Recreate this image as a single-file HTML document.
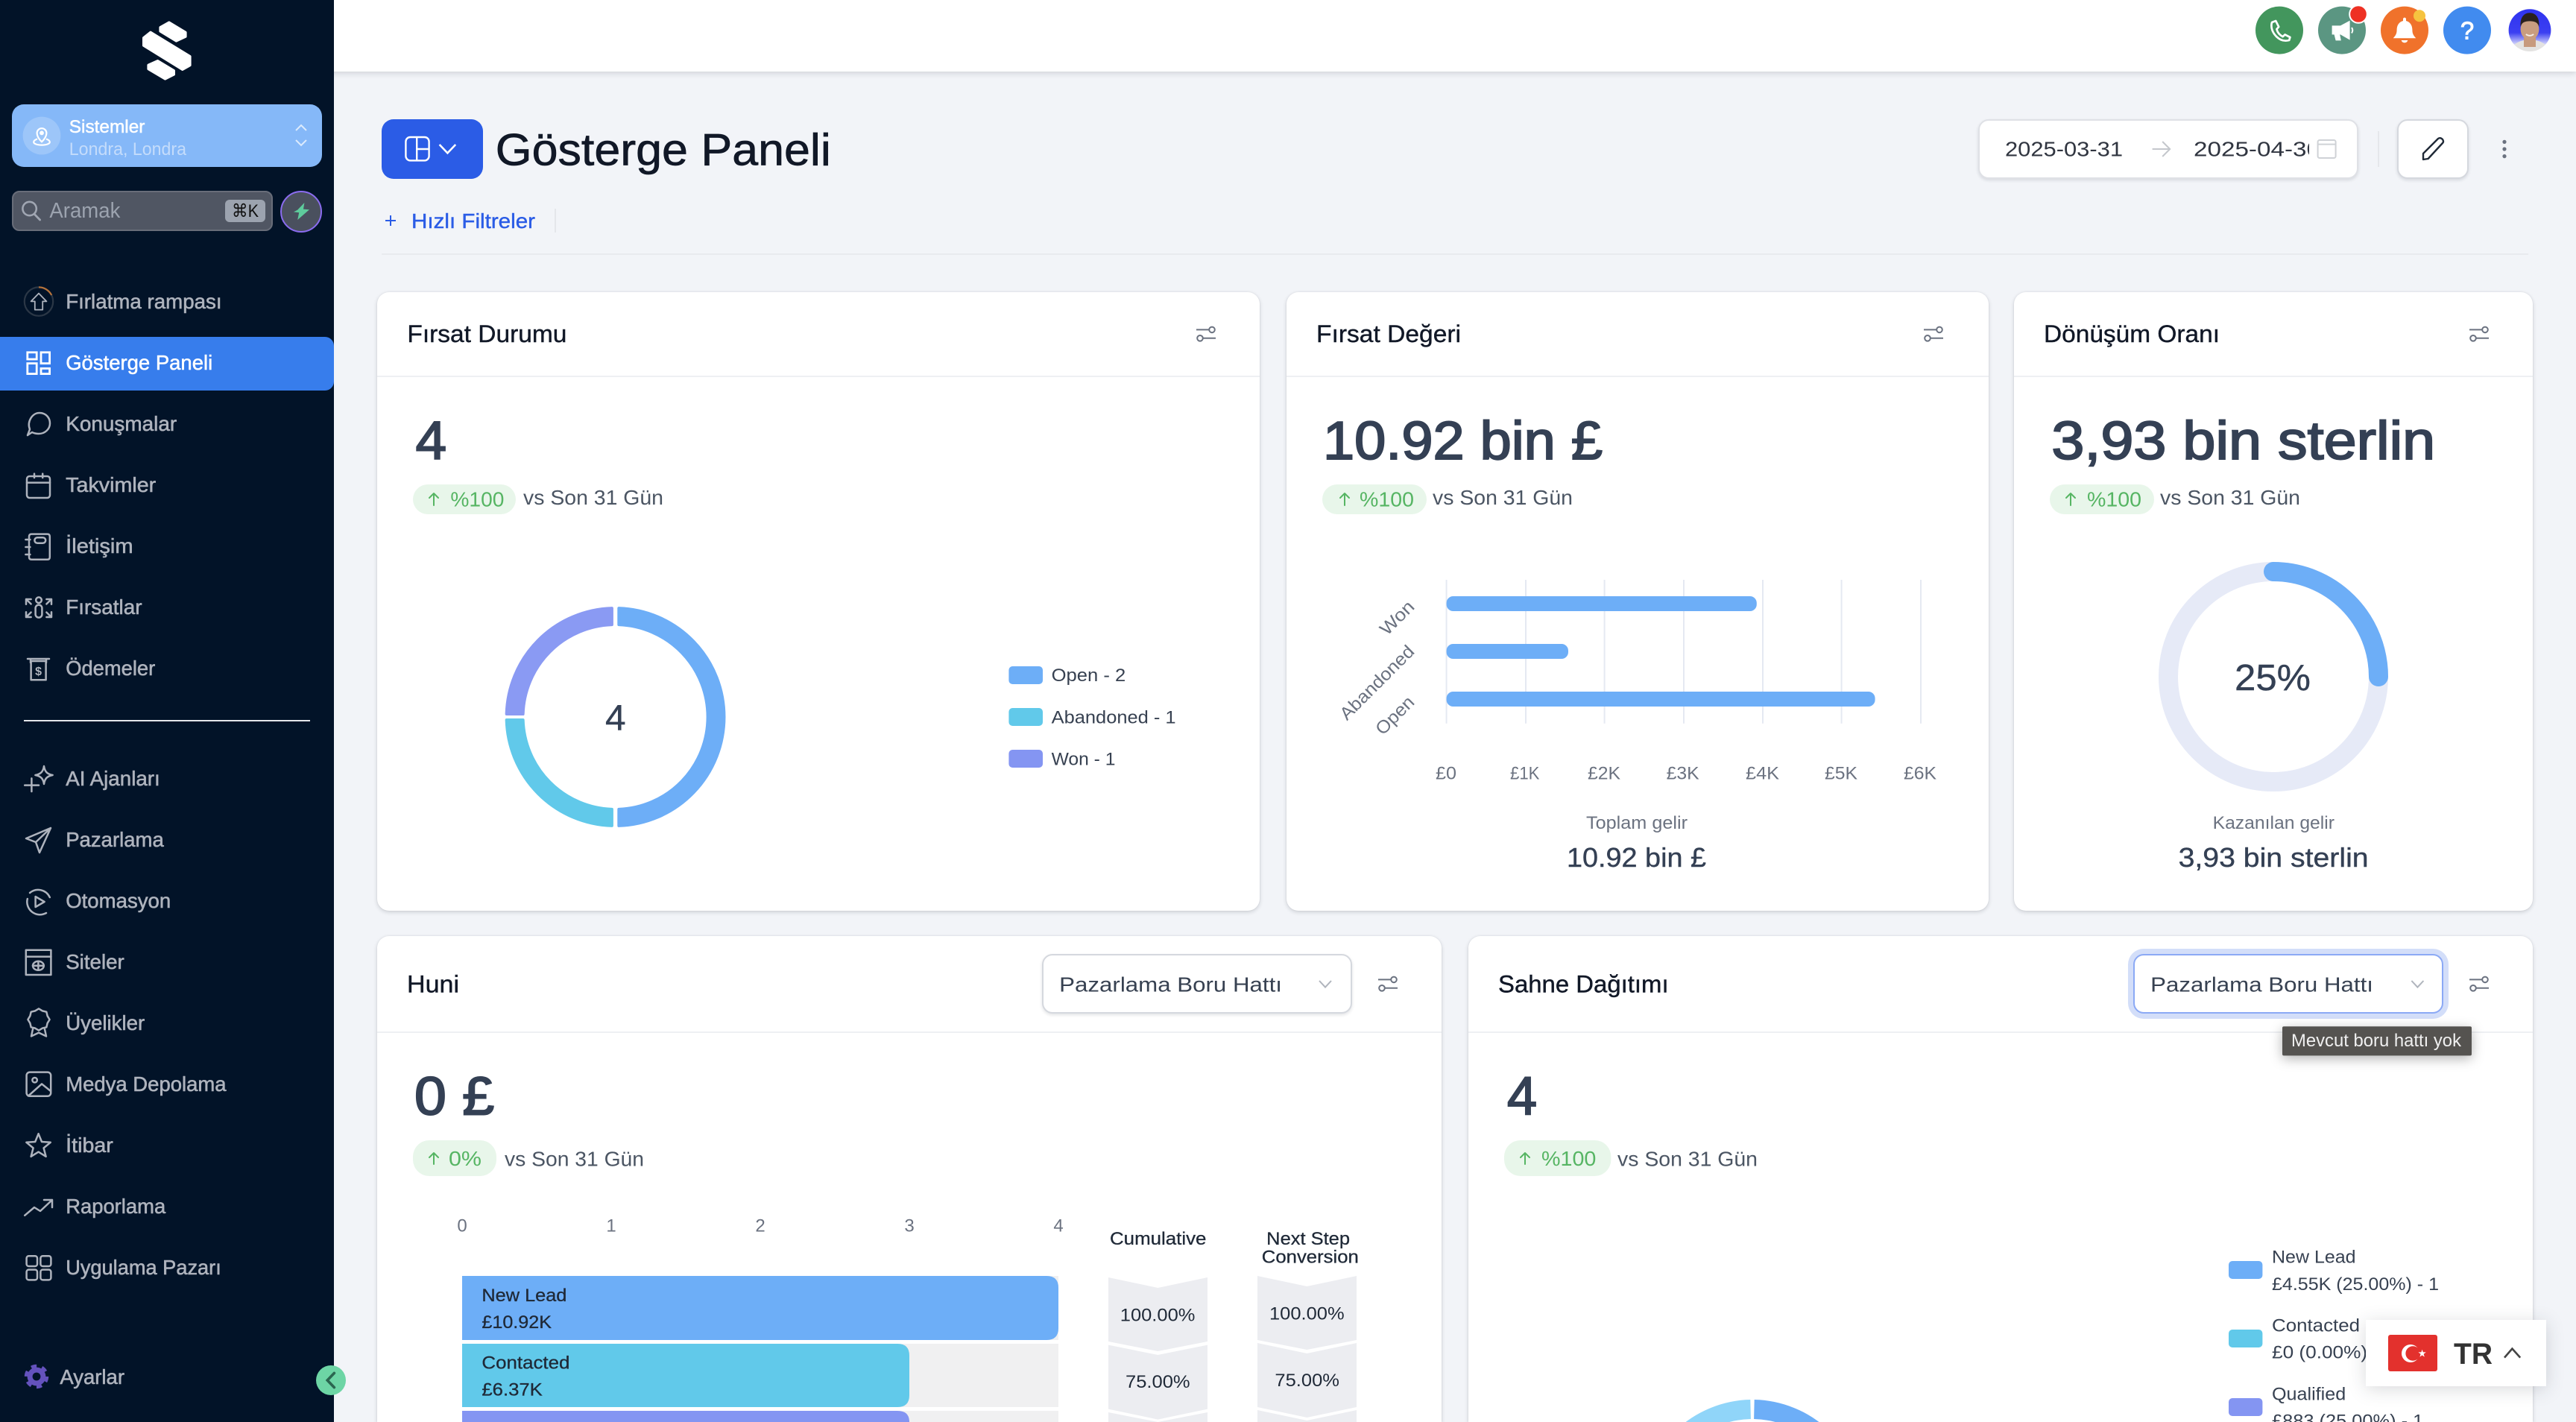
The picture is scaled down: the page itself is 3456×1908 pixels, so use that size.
<!DOCTYPE html>
<html lang="tr"><head><meta charset="utf-8"><title>Gösterge Paneli</title>
<style>
html,body{margin:0;padding:0;width:3456px;height:1908px;overflow:hidden;background:#f2f4f8}
#p{position:absolute;left:0;top:0;width:1728px;height:954px;transform:scale(2);transform-origin:0 0;overflow:hidden;background:#f2f4f8;font-family:"Liberation Sans","DejaVu Sans",sans-serif}
#p div{position:absolute;box-sizing:border-box}
.card{background:#fff;border-radius:8px;box-shadow:0 1px 3px rgba(16,24,40,.16),0 0 1px rgba(16,24,40,.08)}
.card.b{border-radius:8px 8px 0 0}
.ln{background:#eef0f3;height:1px}
.inp{background:#fff;border:1px solid #dfe1e6;border-radius:7px;box-shadow:0 1px 2px rgba(16,24,40,.12)}
svg{position:absolute;left:0;top:0;overflow:hidden}
text{font-family:"Liberation Sans","DejaVu Sans",sans-serif;font-size:14px;white-space:pre}
.n{font-size:14px;fill:#aeb3bd;stroke:#aeb3bd;stroke-width:.28}
.ic{fill:none;stroke:#aeb3bd;stroke-width:1.25;stroke-linecap:round;stroke-linejoin:round}
.t{font-size:16px;fill:#111827;stroke:#111827;stroke-width:.2}
.big{font-size:36px;fill:#344054;stroke:#344054;stroke-width:1}
.g{fill:#56b563}
.vs{fill:#4b5563}
.s{font-size:12px;fill:#6b7280}
.l{font-size:12px;fill:#374151}
.d{font-size:12px;fill:#1f2937;stroke:#1f2937;stroke-width:.15}
.med{font-size:18px;fill:#344054;stroke:#344054;stroke-width:.2}
.arw{fill:none;stroke:#56b563;stroke-width:1;stroke-linecap:round;stroke-linejoin:round}
.fl{fill:none;stroke:#6b7280;stroke-width:1}
.sel{fill:#374151}
.dt{fill:#303540}
</style></head><body>
<div id="p">
<!-- main cards -->
<div style="left:256px;top:170px;width:1440px;height:1px;background:#e8eaee"></div>
<div style="left:372px;top:140px;width:1px;height:16px;background:#e5e7eb"></div>
<div style="left:256px;top:80px;width:68px;height:40px;background:#2b5ce6;border-radius:8px"></div>
<div class="inp" style="left:1327.4px;top:80.2px;width:255px;height:39.4px"></div>
<div style="left:1595px;top:88px;width:1px;height:24px;background:#e5e7eb"></div>
<div class="inp" style="left:1608px;top:80.2px;width:48px;height:39.4px;border-color:#d5d8de"></div>

<div class="card" style="left:253px;top:196px;width:592px;height:414.5px"></div>
<div class="card" style="left:863px;top:196px;width:470.5px;height:414.5px"></div>
<div class="card" style="left:1350.5px;top:196px;width:348.5px;height:414.5px"></div>
<div class="card b" style="left:253px;top:628px;width:714px;height:326px"></div>
<div class="card b" style="left:985px;top:628px;width:714px;height:326px"></div>
<div class="ln" style="left:253px;top:252px;width:592px"></div>
<div class="ln" style="left:863px;top:252px;width:470.5px"></div>
<div class="ln" style="left:1350.5px;top:252px;width:348.5px"></div>
<div class="ln" style="left:253px;top:692px;width:714px"></div>
<div class="ln" style="left:985px;top:692px;width:714px"></div>
<div class="inp" style="left:699.2px;top:640px;width:207.8px;height:40px;border-color:#d5d8de"></div>
<div class="inp" style="left:1431.2px;top:640px;width:207.8px;height:40px;border-color:#8ba9f5;box-shadow:0 0 0 3.5px #d3def9"></div>

<!-- topbar and sidebar -->
<div style="left:0;top:0;width:1728px;height:48px;background:#fff;box-shadow:0 1px 4px rgba(16,24,40,.16)"></div>
<div style="left:0;top:0;width:224px;height:954px;background:#021328"></div>
<div style="left:8px;top:70px;width:208px;height:41.5px;background:#85b8f8;border-radius:8px"></div>
<div style="left:8px;top:127.7px;width:174.5px;height:27.6px;background:#505663;border:1px solid #686d79;border-radius:5px"></div>
<div style="left:151px;top:133.5px;width:26.5px;height:15.8px;background:#9ca3af;border-radius:3px"></div>
<div style="left:188px;top:127.5px;width:28px;height:28px;background:#4a505e;border:1px solid #8b6cf0;border-radius:50%"></div>
<div style="left:0;top:225.5px;width:224px;height:36px;background:#377dec;border-radius:0 6px 6px 0"></div>
<div style="left:16px;top:483px;width:192px;height:1px;background:#e5e7eb"></div>

<svg width="1728" height="954" viewBox="0 0 1728 954" xmlns="http://www.w3.org/2000/svg">
<defs>
<g id="f"><path d="M-6.5 -2.8H2M-1.8 2.9H6.5"/><circle cx="4" cy="-2.8" r="1.9"/><circle cx="-4" cy="2.9" r="1.9"/></g>
<linearGradient id="av" x1="0" y1="0" x2="0" y2="1"><stop offset="0" stop-color="#2f33ef"/><stop offset=".55" stop-color="#3b3ff2"/><stop offset=".8" stop-color="#c9cbfa"/><stop offset="1" stop-color="#fff"/></linearGradient>
<clipPath id="avc"><circle cx="1697" cy="20.3" r="14.2"/></clipPath>
<clipPath id="dc"><rect x="1471" y="85" width="78" height="30"/></clipPath>
</defs>

<!-- logo -->
<g fill="#fff" stroke="#fff" stroke-width="1.6" stroke-linejoin="round">
<polygon points="101,21.6 127.5,37.8 127.5,43.8 122.4,46.7 96.3,30.6 96.3,25.4"/>
<polygon points="113.4,15 124.5,21.7 124.5,24.6 118.2,27.5 107.5,21 107.5,18.3"/>
<polygon points="105.8,40.8 116.7,47.4 116.7,50 110.8,53 99.5,46.3 99.5,43.6"/>
</g>

<!-- location -->
<circle cx="28" cy="91" r="12.7" fill="#fff" fill-opacity=".2"/>
<g fill="none" stroke="#fff" stroke-width="1.1" stroke-linecap="round" stroke-linejoin="round">
<path d="M28 95.2C26 93.2 24.8 91.2 24.8 89.3A3.2 3.2 0 0 1 31.2 89.3C31.2 91.2 30 93.2 28 95.2Z"/>
<circle cx="28" cy="89.2" r=".9" fill="#fff"/>
<path d="M24.6 93.4C23.2 94 22.6 94.7 22.6 95.3C22.6 96.5 25 97.3 28 97.3C31 97.3 33.4 96.5 33.4 95.3C33.4 94.7 32.8 94 31.4 93.4"/>
</g>
<text x="46.4" y="89" style="font-size:12px" fill="#fff" stroke="#fff" stroke-width=".25" textLength="50.8" lengthAdjust="spacingAndGlyphs">Sistemler</text>
<text x="46.4" y="104" style="font-size:12px" fill="#c4dcfb" textLength="78.6" lengthAdjust="spacingAndGlyphs">Londra, Londra</text>
<path d="M198.5 87.5L202 84L205.5 87.5M198.5 94L202 97.5L205.5 94" fill="none" stroke="#dcebfd" stroke-width="1"/>

<!-- search -->
<circle cx="19.8" cy="140" r="4.6" fill="none" stroke="#a0a6b2" stroke-width="1.3"/><path d="M23 143.6L26.8 147.5" stroke="#a0a6b2" stroke-width="1.4" stroke-linecap="round"/>
<text x="33.2" y="146" style="font-size:14.5px" fill="#9ca3af" textLength="47.5" lengthAdjust="spacingAndGlyphs">Aramak</text>
<text x="155.5" y="145.5" style="font-size:12px" fill="#111" textLength="18" lengthAdjust="spacingAndGlyphs">⌘K</text>
<polygon points="204.2,136 199.6,140.8 197,142.2 200.6,142.6 199.6,147.5 207.5,140.6 203.5,140.3" fill="#5ecb9c"/>

<!-- nav -->
<circle cx="26" cy="202.3" r="9.6" fill="none" stroke="#2b3746" stroke-width="1.1"/>
<path d="M26 192.7A9.6 9.6 0 0 1 34.6 198" fill="none" stroke="#b5723a" stroke-width="1.1"/>
<path class="ic" d="M26 196.8L31.2 202.2H28.6V207.8H23.4V202.2H20.8Z" style="stroke-width:.9"/>
<text class="n" x="44.1" y="207" textLength="104.7" lengthAdjust="spacingAndGlyphs">Fırlatma rampası</text>

<g fill="none" stroke="#fff" stroke-width="1.4"><rect x="18.4" y="236.4" width="6.2" height="4.6"/><rect x="27.5" y="236.4" width="5.8" height="7.4"/><rect x="18.4" y="243.8" width="6.2" height="7"/><rect x="27.5" y="247.2" width="5.8" height="3.6"/></g>
<text x="44.1" y="248" fill="#fff" stroke="#fff" stroke-width=".25" textLength="98.5" lengthAdjust="spacingAndGlyphs">Gösterge Paneli</text>

<path class="ic" d="M18.5 292L20 288C18 283 21.5 277 26.5 277C31 277 33.5 280.5 33.5 284C33.5 288 30 291 26 291C24 291 22.5 290.5 21.5 290Z"/>
<text class="n" x="44.1" y="289" textLength="74.5" lengthAdjust="spacingAndGlyphs">Konuşmalar</text>

<g class="ic"><rect x="18" y="319.5" width="15.5" height="14.5" rx="1.8"/><path d="M18 323.8H33.5M23 317.8V320.5M28.6 317.8V320.5"/></g>
<text class="n" x="44.1" y="330" textLength="60.5" lengthAdjust="spacingAndGlyphs">Takvimler</text>

<g class="ic"><path d="M19.5 360Q19.5 358.3 21.2 358.3H31.8Q33.4 358.3 33.4 360V373.7Q33.4 375.4 31.8 375.4H21.2Q19.5 375.4 19.5 373.7Z"/><rect x="23.2" y="360.6" width="7.4" height="3.8" rx="1.9"/><path d="M17.2 362H20.2M17.2 367H20.2M17.2 372H20.2"/></g>
<text class="n" x="44.1" y="371" textLength="45.2" lengthAdjust="spacingAndGlyphs">İletişim</text>

<g class="ic"><circle cx="26" cy="402.6" r="1.9"/><rect x="23.8" y="405.8" width="4.4" height="8.5" rx="2.2"/><path d="M20.8 402H17.5V405.4M17.5 402L20.8 405.2M31.2 402H34.5V405.4M34.5 402L31.2 405.2M20.8 414H17.5V410.6M17.5 414L20.8 410.8M31.2 414H34.5V410.6M34.5 414L31.2 410.8"/></g>
<text class="n" x="44.1" y="412" textLength="51.2" lengthAdjust="spacingAndGlyphs">Fırsatlar</text>

<g class="ic"><path d="M18.5 442H33M20.5 442V444.5M31 442V444.5"/><rect x="20.8" y="443.5" width="10" height="12.6"/></g>
<text x="25.8" y="453" text-anchor="middle" style="font-size:8px;font-weight:bold" fill="#aeb3bd">$</text>
<text class="n" x="44.1" y="453" textLength="60" lengthAdjust="spacingAndGlyphs">Ödemeler</text>

<g class="ic"><path d="M29.5 514C30 517.5 31.5 519.3 35.3 520C31.5 520.7 30 522.5 29.5 526C29 522.5 27.5 520.7 23.7 520C27.5 519.3 29 517.5 29.5 514Z"/><path d="M16.6 526.8H26M21.2 522.2V531"/></g>
<text class="n" x="44.1" y="527" textLength="63.3" lengthAdjust="spacingAndGlyphs">AI Ajanları</text>

<path class="ic" d="M17.5 562.5L34 555.5L26.5 572L24 565ZM24 565L34 555.5"/>
<text class="n" x="44.1" y="568" textLength="65.8" lengthAdjust="spacingAndGlyphs">Pazarlama</text>

<g class="ic"><path d="M33.4 602A8.6 8.6 0 0 0 20 599M18.4 603A8.6 8.6 0 0 0 31 612.5"/><path d="M23.8 601.5L29.8 605L23.8 608.5Z"/></g>
<text class="n" x="44.1" y="609" textLength="70.5" lengthAdjust="spacingAndGlyphs">Otomasyon</text>

<g class="ic"><rect x="17.4" y="637.4" width="16.8" height="16.6"/><path d="M17.4 641.8H34.2"/><ellipse cx="25.7" cy="647.9" rx="3.7" ry="3"/><path d="M22 647.9H29.4M25.7 644.9V650.9"/></g>
<text class="n" x="44.1" y="650" textLength="39.3" lengthAdjust="spacingAndGlyphs">Siteler</text>

<g class="ic"><polygon points="26,676.7 28.41,678.18 31.16,678.84 31.82,681.59 33.3,684 31.82,686.41 31.16,689.16 28.41,689.82 26,691.3 23.59,689.82 20.84,689.16 20.18,686.41 18.7,684 20.18,681.59 20.84,678.84 23.59,678.18"/><path d="M22 690.5L21 695.2L26 692.8L31 695.2L30 690.5"/></g>
<text class="n" x="44.1" y="691" textLength="53" lengthAdjust="spacingAndGlyphs">Üyelikler</text>

<g class="ic"><rect x="17.8" y="719.3" width="16.3" height="16.1" rx="2.2"/><circle cx="23.3" cy="724.6" r="1.6"/><path d="M19 735.2L28 727.2L34 732"/></g>
<text class="n" x="44.1" y="732" textLength="107.7" lengthAdjust="spacingAndGlyphs">Medya Depolama</text>

<polygon class="ic" points="25.8,760.6 28,766 33.9,766.4 29.3,770.2 30.8,775.9 25.8,772.8 20.8,775.9 22.3,770.2 17.7,766.4 23.6,766"/>
<text class="n" x="44.1" y="773" textLength="31.8" lengthAdjust="spacingAndGlyphs">İtibar</text>

<path class="ic" d="M16.6 815.4L23 810L27 812.5L35 805M29.5 805H35V810"/>
<text class="n" x="44.1" y="814" textLength="67" lengthAdjust="spacingAndGlyphs">Raporlama</text>

<g class="ic"><rect x="17.8" y="842.6" width="7.2" height="6.9" rx="1.5"/><rect x="27.2" y="842.6" width="7" height="6.9" rx="1.5"/><rect x="17.8" y="851.8" width="7.2" height="6.9" rx="1.5"/><rect x="27.2" y="851.8" width="7" height="6.9" rx="1.5"/></g>
<text class="n" x="44.1" y="855" textLength="104.3" lengthAdjust="spacingAndGlyphs">Uygulama Pazarı</text>

<circle cx="24.5" cy="923.5" r="6.2" fill="#6452bd"/><circle cx="24.5" cy="923.5" r="6.9" fill="none" stroke="#6452bd" stroke-width="2.4" stroke-dasharray="3.6 3.63"/><circle cx="24.5" cy="923.5" r="2.7" fill="#021328"/>
<text class="n" x="40.2" y="928.5" textLength="43.3" lengthAdjust="spacingAndGlyphs">Ayarlar</text>

<circle cx="222" cy="926" r="10" fill="#6dd5a5"/><path d="M224.2 921.2L219.6 926L224.2 930.8" fill="none" stroke="#2b6650" stroke-width="1.8" stroke-linecap="round"/>

<!-- topbar icons -->
<circle cx="1529" cy="20.3" r="16" fill="#43965d"/>
<path d="M1524 15L1526.6 14L1528.6 18L1527.2 19.6C1527.8 22 1529.4 23.6 1531.3 24.6L1532.8 23.2L1536.2 25L1535.6 27C1532 28 1529 26.5 1527 24.5C1524.5 22 1523 18.4 1524 15Z" fill="none" stroke="#fff" stroke-width="1.35" stroke-linejoin="round"/>
<circle cx="1571" cy="20.3" r="16" fill="#5b9682"/>
<path d="M1564.3 17.2H1570L1576.3 13.8V26.8L1570 23.2H1569.6L1570.4 27.2H1566.8L1565.8 23.2H1564.3Z" fill="#fff"/><path d="M1577.5 18.5Q1578.8 20.3 1577.5 22.2" fill="none" stroke="#fff" stroke-width="1"/>
<circle cx="1582" cy="9.5" r="5.9" fill="#ee3124" stroke="#fff" stroke-width="1"/>
<circle cx="1613" cy="20.3" r="16" fill="#f0722b"/>
<path d="M1613 11.8C1613.7 11.8 1614 12.3 1614 13V14C1617 14.8 1618.2 17.3 1618.2 20C1618.2 23 1619.3 24 1620.6 25.6H1605.4C1606.7 24 1607.8 23 1607.8 20C1607.8 17.3 1609 14.8 1612 14V13C1612 12.3 1612.3 11.8 1613 11.8Z" fill="#fff"/><path d="M1610.8 27H1615.2Q1614.6 28.7 1613 28.7Q1611.4 28.7 1610.8 27Z" fill="#fff"/>
<circle cx="1623" cy="10.6" r="4" fill="#f6c33f"/>
<circle cx="1655" cy="20.3" r="16" fill="#418bef"/>
<text x="1655" y="26.2" text-anchor="middle" style="font-size:16.5px" fill="#fff" stroke="#fff" stroke-width=".45">?</text>
<g clip-path="url(#avc)"><rect x="1682" y="6" width="30" height="29" fill="url(#av)"/><ellipse cx="1697" cy="37" rx="14" ry="10.5" fill="#e4e3e1"/><rect x="1693" y="24" width="8" height="7.5" fill="#c79a7d"/><ellipse cx="1697" cy="19.6" rx="6.2" ry="7.2" fill="#c99d80"/><path d="M1690.8 18C1690.3 11.5 1693.2 8.6 1697 8.6C1700.8 8.6 1703.7 11.5 1703.2 18C1702.4 15 1700.2 14.2 1697 14.2C1693.8 14.2 1691.6 15 1690.8 18Z" fill="#2a211d"/><path d="M1694.4 23Q1697 24.8 1699.6 23" fill="none" stroke="#f5efe9" stroke-width=".9"/></g>

<!-- header -->
<g fill="none" stroke="#fff" stroke-width="1.2" stroke-linejoin="round"><rect x="272.2" y="92" width="15.6" height="15.7" rx="3"/><path d="M279.6 92V107.7M279.6 100H287.8"/></g>
<path d="M294.8 97L300.2 102.7L305.6 97" fill="none" stroke="#fff" stroke-width="1.3"/>
<text x="332.4" y="110.7" style="font-size:30px" fill="#111827" stroke="#111827" stroke-width=".35" textLength="225" lengthAdjust="spacingAndGlyphs">Gösterge Paneli</text>
<path d="M258.5 148H265.5M262 144.5V151.5" stroke="#2b5ce6" stroke-width="1"/>
<text x="276" y="153" fill="#2b5ce6" stroke="#2b5ce6" stroke-width=".2" textLength="83" lengthAdjust="spacingAndGlyphs">Hızlı Filtreler</text>

<text class="dt" x="1345" y="104.8" textLength="79" lengthAdjust="spacingAndGlyphs">2025-03-31</text>
<path d="M1443.8 100H1455.6M1450.6 95L1455.6 100L1450.6 105" fill="none" stroke="#c4c7cc" stroke-width="1"/>
<g clip-path="url(#dc)"><text class="dt" x="1471.5" y="104.8" textLength="85" lengthAdjust="spacingAndGlyphs">2025-04-30</text></g>
<rect x="1554.8" y="94" width="12" height="12" rx="1.2" fill="none" stroke="#cfd2d6" stroke-width="1"/><path d="M1554.8 96.8H1566.8" stroke="#cfd2d6" stroke-width="1"/>
<path d="M1625.5 107V103L1635.5 93Q1637 92 1638.5 93.5Q1639.5 95 1638.5 96L1628.8 106.5Z" fill="none" stroke="#1f2937" stroke-width="1.2" stroke-linejoin="round"/>
<g fill="#6b7280"><circle cx="1680" cy="95.2" r="1.3"/><circle cx="1680" cy="100" r="1.3"/><circle cx="1680" cy="104.8" r="1.3"/></g>

<!-- card 1 -->
<text class="t" x="273.2" y="229.4" textLength="107" lengthAdjust="spacingAndGlyphs">Fırsat Durumu</text>
<use href="#f" x="809" y="224" class="fl"/>
<text class="big" x="278.8" y="308" textLength="20.7" lengthAdjust="spacingAndGlyphs">4</text>
<rect x="277" y="325" width="69" height="20" rx="10" fill="#e8f6ea"/>
<path class="arw" d="M291 339V331M288 334L291 331L294 334"/>
<text class="g" x="302.2" y="339.8" textLength="36" lengthAdjust="spacingAndGlyphs">%100</text>
<text class="vs" x="351" y="338.4" textLength="94" lengthAdjust="spacingAndGlyphs">vs Son 31 Gün</text>
<g stroke-width="2" stroke-linejoin="round">
<path fill="#6daef7" stroke="#6daef7" d="M415.15 408.04A73 73 0 0 1 415.15 553.96L415.15 542.96A62 62 0 0 0 415.15 419.05Z"/>
<path fill="#61c9ea" stroke="#61c9ea" d="M410.45 553.96A73 73 0 0 1 339.83 483L350.83 483A62 62 0 0 0 410.45 542.96Z"/>
<path fill="#8a9af3" stroke="#8a9af3" d="M339.83 479A73 73 0 0 1 410.45 408.04L410.45 419.05A62 62 0 0 0 350.83 479Z"/>
</g>
<text x="406" y="489.7" style="font-size:24px" fill="#344054" stroke="#344054" stroke-width=".2" textLength="13.8" lengthAdjust="spacingAndGlyphs">4</text>
<rect x="676.7" y="447" width="22.8" height="12" rx="2.5" fill="#6daef7"/>
<rect x="676.7" y="475" width="22.8" height="12" rx="2.5" fill="#61c9ea"/>
<rect x="676.7" y="503" width="22.8" height="12" rx="2.5" fill="#8495f2"/>
<text class="l" x="705.3" y="457" textLength="49.8" lengthAdjust="spacingAndGlyphs">Open - 2</text>
<text class="l" x="705.3" y="485.3" textLength="83.5" lengthAdjust="spacingAndGlyphs">Abandoned - 1</text>
<text class="l" x="705.3" y="513.3" textLength="42.9" lengthAdjust="spacingAndGlyphs">Won - 1</text>

<!-- card 2 -->
<text class="t" x="883" y="229.4" textLength="97" lengthAdjust="spacingAndGlyphs">Fırsat Değeri</text>
<use href="#f" x="1297" y="224" class="fl"/>
<text class="big" x="887.5" y="308" textLength="187.5" lengthAdjust="spacingAndGlyphs">10.92 bin £</text>
<rect x="887" y="325" width="70" height="20" rx="10" fill="#e8f6ea"/>
<path class="arw" d="M902 339V331M899 334L902 331L905 334"/>
<text class="g" x="912" y="339.8" textLength="36.5" lengthAdjust="spacingAndGlyphs">%100</text>
<text class="vs" x="961" y="338.4" textLength="94" lengthAdjust="spacingAndGlyphs">vs Son 31 Gün</text>
<path d="M970.3 389V485.4M1023.5 389V485.4M1076.3 389V485.4M1129.5 389V485.4M1182.5 389V485.4M1235.3 389V485.4M1288.5 389V485.4" stroke="#e5e9f2" stroke-width="1"/>
<rect x="970.3" y="400" width="208.1" height="10" rx="4.5" fill="#6daef7"/>
<rect x="970.3" y="432" width="81.7" height="10" rx="4.5" fill="#6daef7"/>
<rect x="970.3" y="464" width="287.5" height="10" rx="4.5" fill="#6daef7"/>
<text class="s" transform="translate(949.5 407.8) rotate(-45)" text-anchor="end" textLength="27" lengthAdjust="spacingAndGlyphs">Won</text>
<text class="s" transform="translate(949.5 437.8) rotate(-45)" text-anchor="end" textLength="65" lengthAdjust="spacingAndGlyphs">Abandoned</text>
<text class="s" transform="translate(949.5 471.8) rotate(-45)" text-anchor="end" textLength="31" lengthAdjust="spacingAndGlyphs">Open</text>
<text class="s" x="963" y="522.7" textLength="14" lengthAdjust="spacingAndGlyphs">£0</text>
<text class="s" x="1013" y="522.7" textLength="19.7" lengthAdjust="spacingAndGlyphs">£1K</text>
<text class="s" x="1065" y="522.7" textLength="22" lengthAdjust="spacingAndGlyphs">£2K</text>
<text class="s" x="1117.8" y="522.7" textLength="22" lengthAdjust="spacingAndGlyphs">£3K</text>
<text class="s" x="1171" y="522.7" textLength="22.5" lengthAdjust="spacingAndGlyphs">£4K</text>
<text class="s" x="1224" y="522.7" textLength="22" lengthAdjust="spacingAndGlyphs">£5K</text>
<text class="s" x="1277" y="522.7" textLength="22" lengthAdjust="spacingAndGlyphs">£6K</text>
<text class="s" x="1064" y="556" textLength="68" lengthAdjust="spacingAndGlyphs">Toplam gelir</text>
<text class="med" x="1051" y="581.4" textLength="93.5" lengthAdjust="spacingAndGlyphs">10.92 bin £</text>

<!-- card 3 -->
<text class="t" x="1371" y="229.4" textLength="118" lengthAdjust="spacingAndGlyphs">Dönüşüm Oranı</text>
<use href="#f" x="1663" y="224" class="fl"/>
<text class="big" x="1376.2" y="308" textLength="257.4" lengthAdjust="spacingAndGlyphs">3,93 bin sterlin</text>
<rect x="1375" y="325" width="70" height="20" rx="10" fill="#e8f6ea"/>
<path class="arw" d="M1389 339V331M1386 334L1389 331L1392 334"/>
<text class="g" x="1400" y="339.8" textLength="36.5" lengthAdjust="spacingAndGlyphs">%100</text>
<text class="vs" x="1449" y="338.4" textLength="94" lengthAdjust="spacingAndGlyphs">vs Son 31 Gün</text>
<circle cx="1525" cy="454" r="70.5" fill="none" stroke="#e6eaf7" stroke-width="13"/>
<path d="M1525 383.5A70.5 70.5 0 0 1 1595.5 454" fill="none" stroke="#6daef7" stroke-width="13" stroke-linecap="round"/>
<text x="1499" y="463" style="font-size:24.5px" fill="#344054" stroke="#344054" stroke-width=".2" textLength="51" lengthAdjust="spacingAndGlyphs">25%</text>
<text class="s" x="1484.3" y="556" textLength="81.7" lengthAdjust="spacingAndGlyphs">Kazanılan gelir</text>
<text class="med" x="1461.3" y="581.4" textLength="127.5" lengthAdjust="spacingAndGlyphs">3,93 bin sterlin</text>

<!-- card 4 funnel -->
<text class="t" x="273" y="665.8" textLength="35" lengthAdjust="spacingAndGlyphs">Huni</text>
<text class="sel" x="710.6" y="665.2" textLength="149.4" lengthAdjust="spacingAndGlyphs">Pazarlama Boru Hattı</text>
<path d="M885 658L889 662.3L893 658" fill="none" stroke="#b0b5bd" stroke-width="1"/>
<use href="#f" x="931" y="660" class="fl"/>
<text class="big" x="278" y="747.8" textLength="53.5" lengthAdjust="spacingAndGlyphs">0 £</text>
<rect x="277" y="765" width="56" height="24" rx="11" fill="#e8f6ea"/>
<path class="arw" d="M291 781V773.5M288 776.5L291 773.5L294 776.5"/>
<text class="g" x="301" y="782" textLength="22" lengthAdjust="spacingAndGlyphs">0%</text>
<text class="vs" x="338.5" y="782.3" textLength="93.5" lengthAdjust="spacingAndGlyphs">vs Son 31 Gün</text>
<g text-anchor="middle">
<text class="s" x="310" y="826.2">0</text><text class="s" x="410" y="826.2">1</text><text class="s" x="510" y="826.2">2</text><text class="s" x="610" y="826.2">3</text><text class="s" x="710" y="826.2">4</text>
</g>
<text class="d" x="744.5" y="835" textLength="64.7" lengthAdjust="spacingAndGlyphs">Cumulative</text>
<text class="d" x="849.6" y="835" textLength="55.9" lengthAdjust="spacingAndGlyphs">Next Step</text>
<text class="d" x="846.4" y="847.3" textLength="65" lengthAdjust="spacingAndGlyphs">Conversion</text>
<rect x="310" y="856" width="400" height="43" fill="#f0f0f1"/>
<rect x="310" y="901.5" width="400" height="42.5" fill="#f0f0f1"/>
<rect x="310" y="946.5" width="400" height="7.5" fill="#f0f0f1"/>
<path d="M310 856H702Q710 856 710 864V891Q710 899 702 899H310Z" fill="#6daef7"/>
<path d="M310 901.5H602Q610 901.5 610 909.5V936Q610 944 602 944H310Z" fill="#61c9ea"/>
<path d="M310 946.5H602Q610 946.5 610 954H310Z" fill="#8495f2"/>
<text class="d" x="323.2" y="872.9" textLength="57" lengthAdjust="spacingAndGlyphs">New Lead</text>
<text class="d" x="323.2" y="891" textLength="46.8" lengthAdjust="spacingAndGlyphs">£10.92K</text>
<text class="d" x="323.2" y="918.2" textLength="59" lengthAdjust="spacingAndGlyphs">Contacted</text>
<text class="d" x="323.2" y="936.2" textLength="40.7" lengthAdjust="spacingAndGlyphs">£6.37K</text>
<text class="d" x="323.2" y="963.5" textLength="50" lengthAdjust="spacingAndGlyphs">Qualified</text>
<g fill="#ecedf1">
<polygon points="743.5,857 776.7,864 810,857 810,900 776.7,906.5 743.5,900"/>
<polygon points="743.5,902.3 776.7,909 810,902.3 810,945.3 776.7,952.3 743.5,945.3"/>
<polygon points="743.5,947.5 776.7,954 810,947.5 810,954 743.5,954"/>
<polygon points="843.5,856 876.7,863 910,856 910,899 876.7,905.5 843.5,899"/>
<polygon points="843.5,901 876.7,908 910,901 910,944 876.7,951 843.5,944"/>
<polygon points="843.5,946 876.7,953 910,946 910,954 843.5,954"/>
</g>
<text class="d" style="stroke-width:0" x="751.4" y="886.3" textLength="50.3" lengthAdjust="spacingAndGlyphs">100.00%</text>
<text class="d" style="stroke-width:0" x="755" y="931" textLength="43.3" lengthAdjust="spacingAndGlyphs">75.00%</text>
<text class="d" style="stroke-width:0" x="851.5" y="885.3" textLength="50.3" lengthAdjust="spacingAndGlyphs">100.00%</text>
<text class="d" style="stroke-width:0" x="855.2" y="930" textLength="43.3" lengthAdjust="spacingAndGlyphs">75.00%</text>

<!-- card 5 -->
<text class="t" x="1005" y="665.8" textLength="114.3" lengthAdjust="spacingAndGlyphs">Sahne Dağıtımı</text>
<text class="sel" x="1442.6" y="665.2" textLength="149.4" lengthAdjust="spacingAndGlyphs">Pazarlama Boru Hattı</text>
<path d="M1617.7 658L1621.7 662.3L1625.7 658" fill="none" stroke="#b0b5bd" stroke-width="1"/>
<use href="#f" x="1663" y="660" class="fl"/>
<text class="big" x="1011" y="747.8" textLength="20" lengthAdjust="spacingAndGlyphs">4</text>
<rect x="1009" y="765" width="71.7" height="24" rx="11" fill="#e8f6ea"/>
<path class="arw" d="M1023 781V773.5M1020 776.5L1023 773.5L1026 776.5"/>
<text class="g" x="1034" y="782" textLength="36.7" lengthAdjust="spacingAndGlyphs">%100</text>
<text class="vs" x="1085" y="782.3" textLength="94" lengthAdjust="spacingAndGlyphs">vs Son 31 Gün</text>
<rect x="1495" y="846" width="22.7" height="12" rx="2.5" fill="#6daef7"/>
<rect x="1495" y="892" width="22.7" height="12" rx="2.5" fill="#61c9ea"/>
<rect x="1495" y="938" width="22.7" height="12" rx="2.5" fill="#8495f2"/>
<text class="l" x="1524" y="847.3" textLength="56.3" lengthAdjust="spacingAndGlyphs">New Lead</text>
<text class="l" x="1524" y="865.4" textLength="112" lengthAdjust="spacingAndGlyphs">£4.55K (25.00%) - 1</text>
<text class="l" x="1524" y="893.3" textLength="59" lengthAdjust="spacingAndGlyphs">Contacted</text>
<text class="l" x="1524" y="911.3" textLength="83" lengthAdjust="spacingAndGlyphs">£0 (0.00%) - 1</text>
<text class="l" x="1524" y="939.3" textLength="49.6" lengthAdjust="spacingAndGlyphs">Qualified</text>
<text class="l" x="1524" y="957.3" textLength="101.6" lengthAdjust="spacingAndGlyphs">£883 (25.00%) - 1</text>
<path d="M1176.7 945.5A68.5 68.5 0 0 1 1222 964" fill="none" stroke="#6daef7" stroke-width="13"/>
<path d="M1129 964A68.5 68.5 0 0 1 1174.3 945.5" fill="none" stroke="#90d5f9" stroke-width="13"/>

<!-- tooltip -->
<rect x="1531" y="688.6" width="127" height="19.6" rx="1" fill="#555350" style="filter:drop-shadow(0 2px 4px rgba(0,0,0,.3))"/>
<text x="1537" y="702" style="font-size:12px" fill="#f0f0f0" textLength="114" lengthAdjust="spacingAndGlyphs">Mevcut boru hattı yok</text>

<!-- language -->
<rect x="1587" y="885.5" width="121" height="44.5" fill="#fff" style="filter:drop-shadow(0 2px 6px rgba(16,24,40,.16))"/>
<rect x="1602" y="895.5" width="33" height="24.5" rx="1.5" fill="#e3312d"/>
<circle cx="1617" cy="908" r="6" fill="#fff"/><circle cx="1618.6" cy="908" r="4.9" fill="#e3312d"/>
<polygon points="1624.8,905.4 1625.4,907.2 1627.4,907.2 1625.8,908.4 1626.4,910.3 1624.8,909.2 1623.2,910.3 1623.8,908.4 1622.2,907.2 1624.2,907.2" fill="#fff"/>
<text x="1646" y="915" style="font-size:20px;font-weight:bold" fill="#333" textLength="26" lengthAdjust="spacingAndGlyphs">TR</text>
<path d="M1680 910.8L1685.2 904.8L1690.6 910.8" fill="none" stroke="#444" stroke-width="1.3"/>
</svg>
</div>
</body></html>
